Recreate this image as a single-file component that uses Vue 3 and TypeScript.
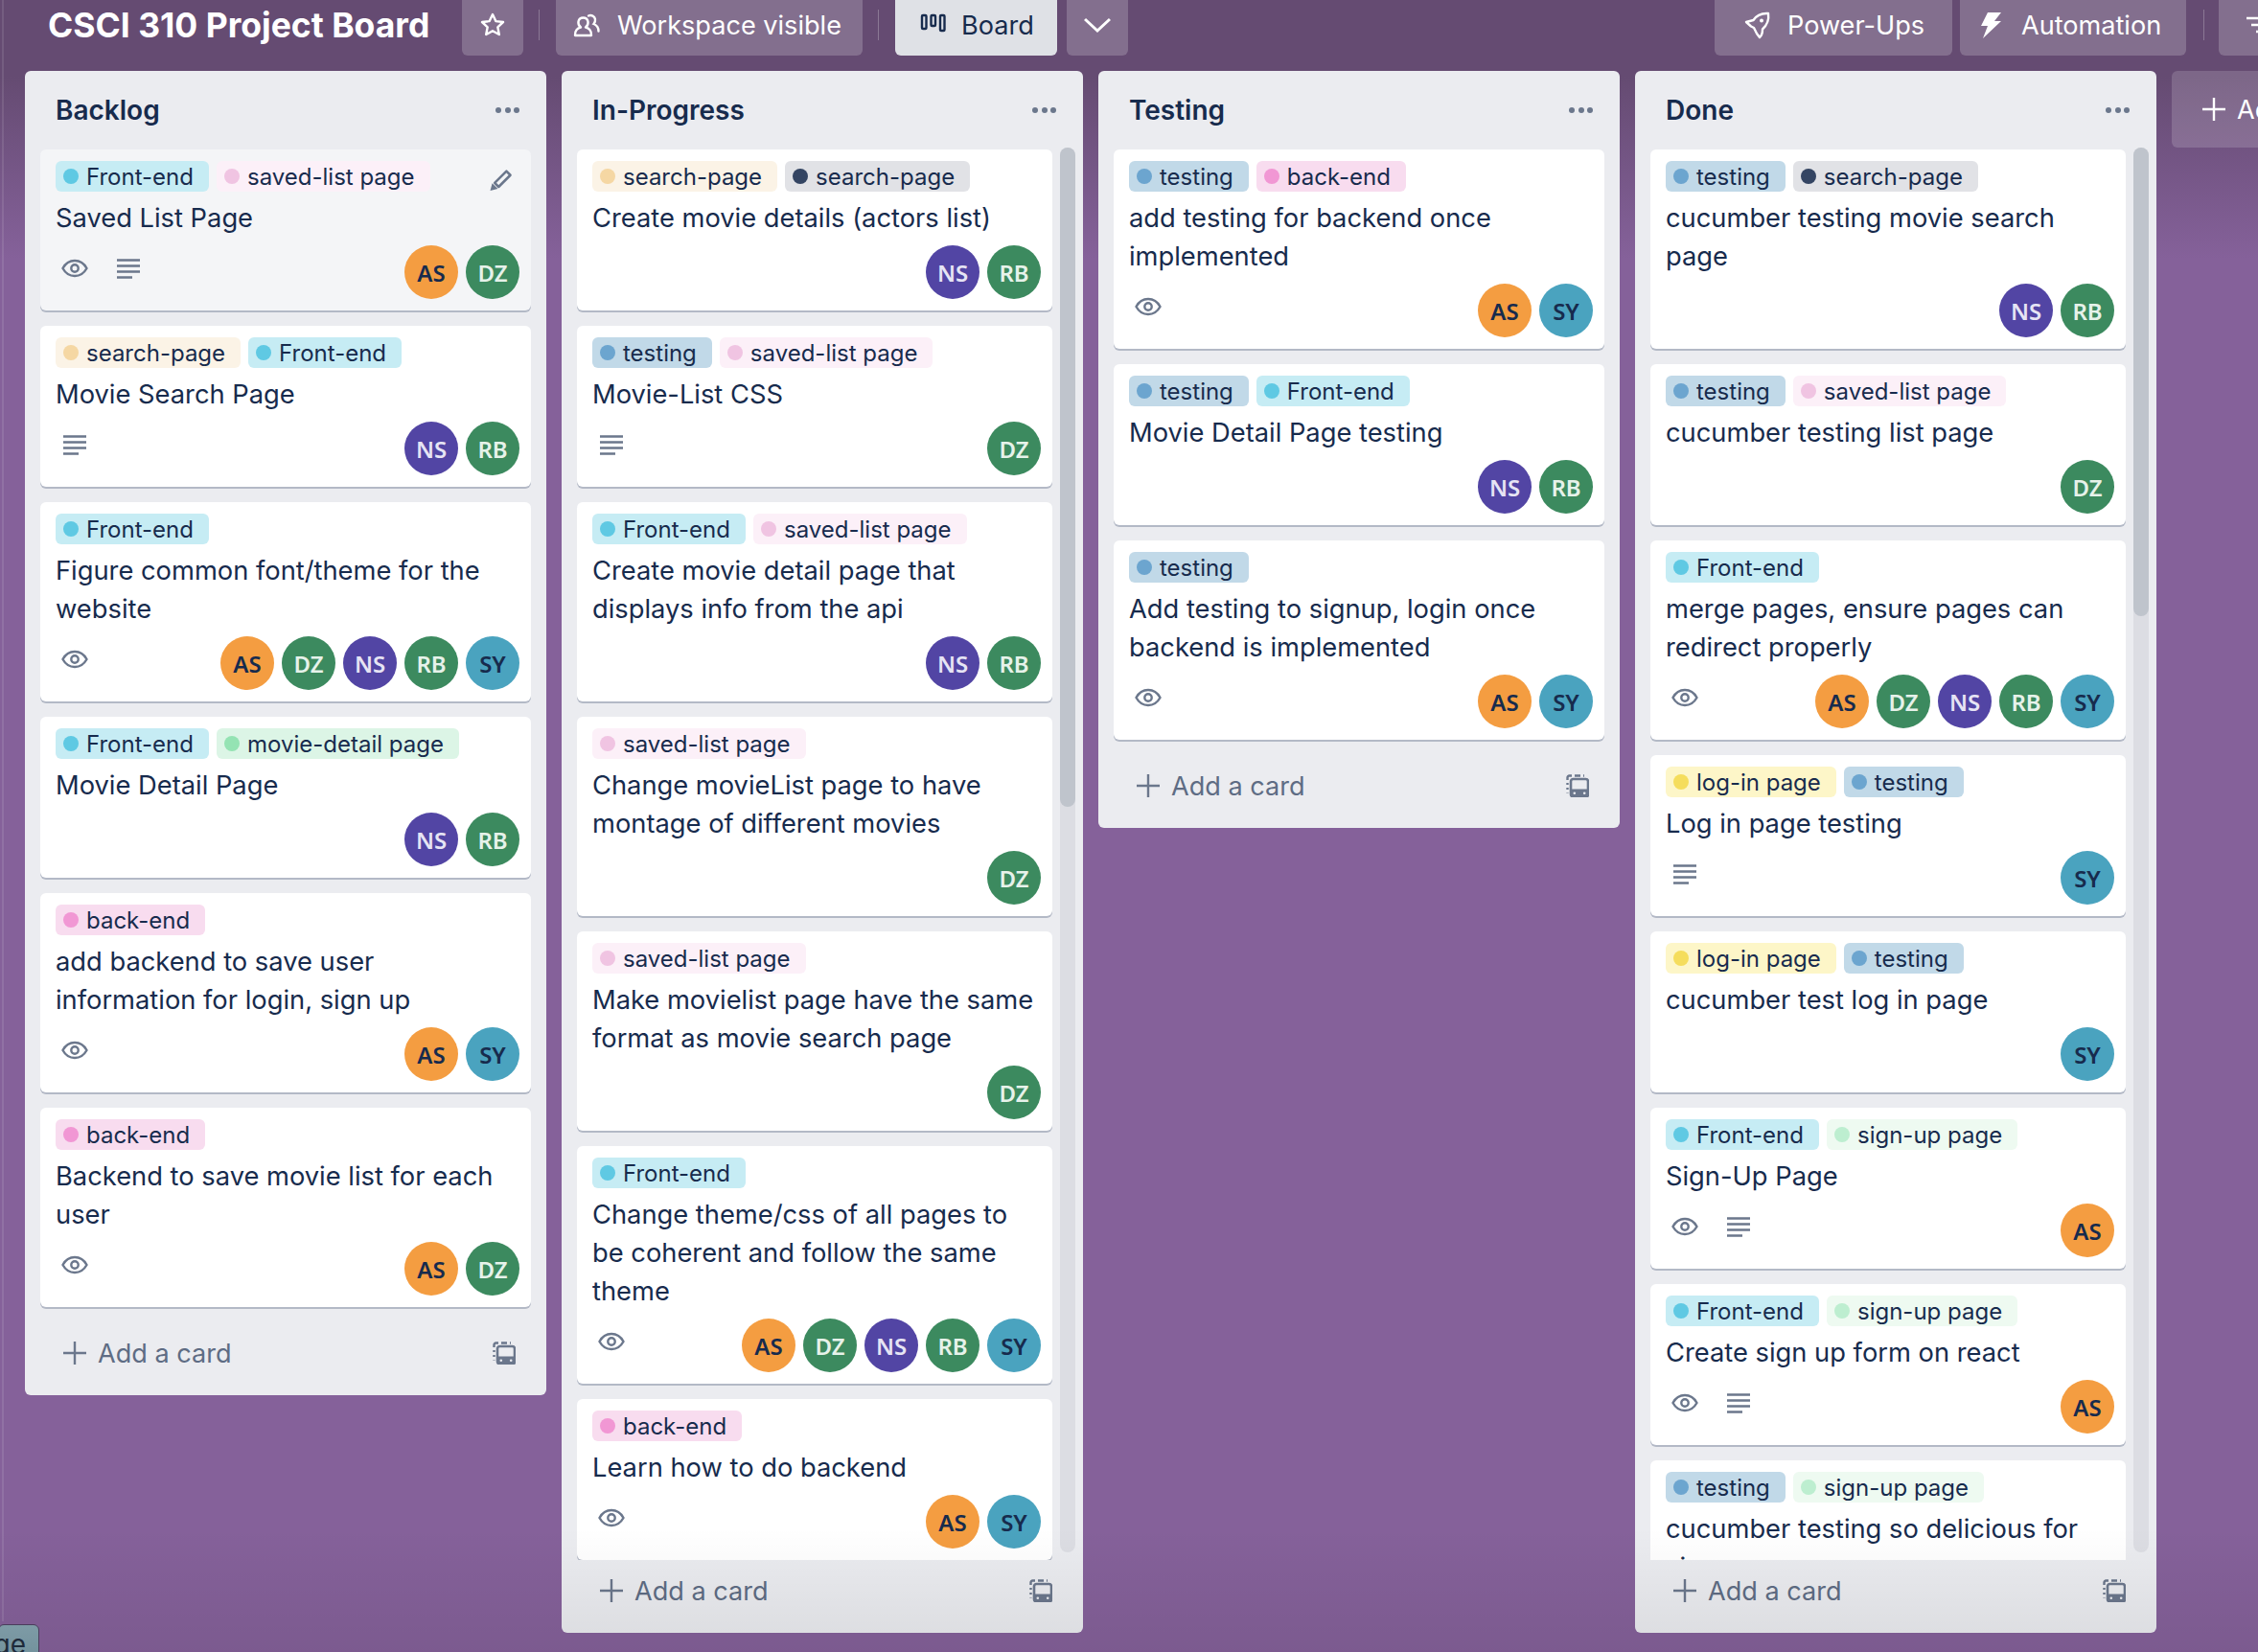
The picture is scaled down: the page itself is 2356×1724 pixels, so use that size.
<script setup lang="ts">
type Tag = 'front' | 'saved' | 'peach' | 'dark' | 'testing' | 'back' | 'detail' | 'login' | 'signup'
type Who = 'AS' | 'DZ' | 'NS' | 'RB' | 'SY'

interface Card {
  tags: Tag[]
  title: string
  eye?: boolean
  desc?: boolean
  who: Who[]
  hover?: boolean
}

interface List {
  name: string
  thumb?: number
  cards: Card[]
}

const tagNames: Record<Tag, string> = {
  front: 'Front-end',
  saved: 'saved-list page',
  peach: 'search-page',
  dark: 'search-page',
  testing: 'testing',
  back: 'back-end',
  detail: 'movie-detail page',
  login: 'log-in page',
  signup: 'sign-up page',
}

const everyone: Who[] = ['AS', 'DZ', 'NS', 'RB', 'SY']

const lists: List[] = [
  {
    name: 'Backlog',
    cards: [
      { tags: ['front', 'saved'], title: 'Saved List Page', eye: true, desc: true, who: ['AS', 'DZ'], hover: true },
      { tags: ['peach', 'front'], title: 'Movie Search Page', desc: true, who: ['NS', 'RB'] },
      { tags: ['front'], title: 'Figure common font/theme for the website', eye: true, who: everyone },
      { tags: ['front', 'detail'], title: 'Movie Detail Page', who: ['NS', 'RB'] },
      { tags: ['back'], title: 'add backend to save user information for login, sign up', eye: true, who: ['AS', 'SY'] },
      { tags: ['back'], title: 'Backend to save movie list for each user', eye: true, who: ['AS', 'DZ'] },
    ],
  },
  {
    name: 'In-Progress',
    thumb: 688,
    cards: [
      { tags: ['peach', 'dark'], title: 'Create movie details (actors list)', who: ['NS', 'RB'] },
      { tags: ['testing', 'saved'], title: 'Movie-List CSS', desc: true, who: ['DZ'] },
      { tags: ['front', 'saved'], title: 'Create movie detail page that displays info from the api', who: ['NS', 'RB'] },
      { tags: ['saved'], title: 'Change movieList page to have montage of different movies', who: ['DZ'] },
      { tags: ['saved'], title: 'Make movielist page have the same format as movie search page', who: ['DZ'] },
      { tags: ['front'], title: 'Change theme/css of all pages to be coherent and follow the same theme', eye: true, who: everyone },
      { tags: ['back'], title: 'Learn how to do backend', eye: true, who: ['AS', 'SY'] },
    ],
  },
  {
    name: 'Testing',
    cards: [
      { tags: ['testing', 'back'], title: 'add testing for backend once implemented', eye: true, who: ['AS', 'SY'] },
      { tags: ['testing', 'front'], title: 'Movie Detail Page testing', who: ['NS', 'RB'] },
      { tags: ['testing'], title: 'Add testing to signup, login once backend is implemented', eye: true, who: ['AS', 'SY'] },
    ],
  },
  {
    name: 'Done',
    thumb: 489,
    cards: [
      { tags: ['testing', 'dark'], title: 'cucumber testing movie search page', who: ['NS', 'RB'] },
      { tags: ['testing', 'saved'], title: 'cucumber testing list page', who: ['DZ'] },
      { tags: ['front'], title: 'merge pages, ensure pages can redirect properly', eye: true, who: everyone },
      { tags: ['login', 'testing'], title: 'Log in page testing', desc: true, who: ['SY'] },
      { tags: ['login', 'testing'], title: 'cucumber test log in page', who: ['SY'] },
      { tags: ['front', 'signup'], title: 'Sign-Up Page', eye: true, desc: true, who: ['AS'] },
      { tags: ['front', 'signup'], title: 'Create sign up form on react', eye: true, desc: true, who: ['AS'] },
      { tags: ['testing', 'signup'], title: 'cucumber testing so delicious for sign up', who: ['AS'] },
    ],
  },
]
</script>

<template>
  <div class="page">
    <svg class="sprite" aria-hidden="true">
      <symbol id="i-eye" viewBox="0 0 28 24">
        <path d="M1.5 12C4.5 6.5 9 4 14 4s9.500 2.500 12.500 8C23.500 17.500 19 20 14 20S4.500 17.500 1.500 12Z" fill="none" stroke="currentColor" stroke-width="2.400" />
        <circle cx="14" cy="12" r="3.700" fill="none" stroke="currentColor" stroke-width="2.400" />
      </symbol>
      <symbol id="i-desc" viewBox="0 0 24 24">
        <path d="M0 3.500h24M0 9.500h24M0 15.500h24M0 21.500h16" fill="none" stroke="currentColor" stroke-width="2.400" />
      </symbol>
      <symbol id="i-plus" viewBox="0 0 24 24">
        <path d="M12 0v24M0 12h24" fill="none" stroke="currentColor" stroke-width="2.400" />
      </symbol>
      <symbol id="i-template" viewBox="0 0 24 24">
        <path d="M1.500 6V3.500a2 2 0 0 1 2-2H6M9 1.500h6M18 1.500h1M1.500 9v2M1.500 14v2M1.500 19v.500" fill="none" stroke="currentColor" stroke-width="2.400" />
        <rect x="5" y="5" width="18" height="18.500" rx="2.500" fill="none" stroke="currentColor" stroke-width="2.600" />
        <path d="M5 15.500h18v8H5Z" fill="currentColor" />
        <circle cx="8.800" cy="19.800" r="1.300" fill="#ebecf0" />
        <circle cx="19.200" cy="19.800" r="1.300" fill="#ebecf0" />
      </symbol>
    </svg>

    <header class="header">
      <h1 class="board-title">CSCI 310 Project Board</h1>
      <button class="btn btn-square">
        <svg width="28" height="28" viewBox="0 0 28 28"><path d="M14 3l3.300 7.100 7.700.9-5.700 5.300 1.500 7.700L14 20.200 7.200 24l1.500-7.700L3 11l7.700-.9Z" fill="none" stroke="currentColor" stroke-width="2.400" stroke-linejoin="round" /></svg>
      </button>
      <span class="divider"></span>
      <button class="btn btn-workspace">
        <svg class="btn-icon" viewBox="0 0 32 32"><path d="M4 27c-.5-5 3-8 6-8.500-2-1.500-3-3.500-2.500-6 .5-2.500 2.500-4 5-4s4.500 1.500 5 4c.5 2.500-.5 4.500-2.500 6 3 .5 6.500 3.500 6 8.500Z" fill="none" stroke="currentColor" stroke-width="2.400" stroke-linejoin="round" /><path d="M18 6.500c3-1.500 6.500.5 7 3.500.4 2.200-.5 3.800-1.500 5 2.500 1 5 3.500 5 7.500" fill="none" stroke="currentColor" stroke-width="2.400" stroke-linecap="round" /></svg>
        Workspace visible
      </button>
      <span class="divider"></span>
      <button class="btn btn-board">
        <svg class="btn-icon" viewBox="0 0 32 32"><rect x="4" y="6" width="4.500" height="14" rx="1" fill="none" stroke="currentColor" stroke-width="2.400" /><rect x="13.500" y="6" width="4.500" height="11" rx="1" fill="none" stroke="currentColor" stroke-width="2.400" /><rect x="23" y="6" width="4.500" height="16" rx="1" fill="none" stroke="currentColor" stroke-width="2.400" /></svg>
        Board
      </button>
      <button class="btn btn-square btn-chevron">
        <svg width="28" height="28" viewBox="0 0 28 28"><path d="M1 8l13 12L27 8" fill="none" stroke="currentColor" stroke-width="3" /></svg>
      </button>
      <div class="header-right">
        <button class="btn btn-power">
          <svg class="btn-icon" viewBox="0 0 32 32"><path d="M28 4c-7-.5-12 1.500-15.500 7L5 13l5 4.500 3 1.500 3 6 3 4c2-1.500 3-4.500 3-8.500C27 16 29 11 28 4Z" fill="none" stroke="currentColor" stroke-width="2.400" stroke-linejoin="round" /><circle cx="21" cy="11.500" r="2" fill="currentColor" /></svg>
          Power-Ups
        </button>
        <button class="btn btn-auto">
          <svg class="btn-icon" viewBox="0 0 32 32"><path d="M13 3h14l-7 9h7L8 30l5-13H6Z" fill="currentColor" /></svg>
          Automation
        </button>
        <span class="divider"></span>
        <button class="btn btn-filter">
          <svg class="btn-icon" viewBox="0 0 32 32"><path d="M3 9h26M8 16h16M13 23h6" fill="none" stroke="currentColor" stroke-width="2.600" /></svg>
          Filter
        </button>
      </div>
    </header>

    <main class="board">
      <section v-for="list in lists" :key="list.name" class="list">
        <div class="list-head">
          <h2 class="list-name">{{ list.name }}</h2>
          <span class="dots"><i></i><i></i><i></i></span>
        </div>

        <div class="list-body">
          <div class="cards" :class="{ 'has-bar': list.thumb }">
            <article v-for="card in list.cards" :key="card.title" class="card" :class="{ hover: card.hover }">
              <div class="tags">
                <span v-for="tag in card.tags" :key="tag" class="tag" :class="'tag-' + tag">
                  <i class="dot"></i>{{ tagNames[tag] }}
                </span>
              </div>
              <svg v-if="card.hover" class="pencil" viewBox="0 0 24 24">
                <path d="M7 14.500L17.500 4l3.500 3.500L10.500 18Z" fill="none" stroke="currentColor" stroke-width="2.200" stroke-linejoin="round" />
                <path d="M3 21.500l1.800-6.800 5 5Z" fill="currentColor" />
              </svg>
              <p class="card-title">{{ card.title }}</p>
              <div class="card-foot">
                <div class="badges">
                  <span v-if="card.eye" class="badge"><svg width="28" height="24"><use href="#i-eye" /></svg></span>
                  <span v-if="card.desc" class="badge"><svg width="24" height="24"><use href="#i-desc" /></svg></span>
                </div>
                <div class="avatars">
                  <span v-for="w in card.who" :key="w" class="avatar" :class="'av-' + w">{{ w }}</span>
                </div>
              </div>
            </article>
          </div>
          <div v-if="list.thumb" class="scrollbar">
            <div class="thumb" :style="{ height: list.thumb + 'px' }"></div>
          </div>
        </div>

        <div class="composer">
          <span class="add-icon"><svg width="24" height="24"><use href="#i-plus" /></svg></span>
          <span class="add-text">Add a card</span>
          <svg class="template" width="24" height="24"><use href="#i-template" /></svg>
        </div>
      </section>

      <div class="add-list">
        <svg width="24" height="24"><use href="#i-plus" /></svg>
        <span>Add another list</span>
      </div>
    </main>

    <div class="edge-line"></div>
    <div class="bottom-shade"></div>
    <div class="tooltip"><span>saved-list page</span></div>
  </div>
</template>

<style>
html, body {
  margin: 0;
  background: #85619a;
}
</style>

<style scoped>
.page {
  position: relative;
  width: 2356px;
  height: 1724px;
  overflow: hidden;
  font-family: Inter, "Liberation Sans", sans-serif;
  color: #172b4d;
  background: linear-gradient(180deg, #654b72 0, #654b72 80px, #85619a 270px, #85619a 100%);
}

.sprite {
  position: absolute;
  width: 0;
  height: 0;
}

.header {
  display: flex;
  align-items: center;
  height: 64px;
  margin-top: -6px;
  margin-bottom: 16px;
  padding-left: 50px;
}

.board-title {
  margin: 0 32px 0 0;
  width: 400px;
  font-size: 35.500px;
  font-weight: 700;
  color: #fff;
  white-space: nowrap;
}

.btn {
  display: flex;
  align-items: center;
  flex: none;
  height: 64px;
  padding: 0 24px 0 16px;
  gap: 16px;
  border: 0;
  border-radius: 6px;
  background: rgba(255, 255, 255, 0.2);
  color: #fff;
  font-family: inherit;
  font-size: 27.100px;
  white-space: nowrap;
}

.btn-icon {
  width: 32px;
  height: 32px;
  flex: none;
}

.btn-square {
  width: 64px;
  padding: 0;
  justify-content: center;
}

.divider {
  flex: none;
  width: 1px;
  height: 32px;
  margin: 0 17px 0 16px;
  background: rgba(255, 255, 255, 0.25);
}

.btn-workspace {
  width: 320px;
}

.btn-board {
  width: 169px;
  padding: 0 0 0 24px;
  gap: 13px;
  background: #dfe1e6;
  color: #172b4d;
}

.btn-chevron {
  margin-left: 10px;
}

.header-right {
  display: flex;
  align-items: center;
  margin-left: auto;
  gap: 8px;
  margin-right: -79px;
}

.btn-power {
  width: 248px;
  padding-left: 28px;
}

.btn-auto {
  width: 236px;
}

.header-right .divider {
  margin: 0 7px 0 10px;
}

.btn-filter {
  width: 120px;
  padding-left: 26px;
}

.board {
  display: flex;
  align-items: flex-start;
  gap: 16px;
  padding-left: 26px;
}

.list {
  flex: none;
  display: flex;
  flex-direction: column;
  width: 544px;
  max-height: 1630px;
  border-radius: 6px;
  background: #ebecf0;
}

.list-head {
  flex: none;
  display: flex;
  align-items: center;
  justify-content: space-between;
  height: 82px;
  padding: 0 28px 0 32px;
  box-sizing: border-box;
}

.list-name {
  margin: 0;
  font-size: 28px;
  font-weight: 600;
}

.dots {
  display: flex;
  gap: 3.500px;
}

.dots i {
  width: 6px;
  height: 6px;
  border-radius: 50%;
  background: #6b778c;
}

.list-body {
  flex: 1;
  min-height: 0;
  display: flex;
}

.cards {
  flex: 1;
  min-width: 0;
  overflow: hidden;
  padding: 0 16px;
}

.cards.has-bar {
  padding-right: 8px;
}

.card {
  position: relative;
  margin-bottom: 16px;
  padding: 12px 12px 12px 16px;
  border-radius: 6px;
  background: #fff;
  box-shadow: 0 2px 0 #b3b9c6;
}

.card.hover {
  background: #f4f5f7;
}

.tags {
  display: flex;
  gap: 8px;
  margin-bottom: 8px;
}

.tag {
  display: flex;
  align-items: center;
  height: 32px;
  padding: 0 16px 0 8px;
  gap: 8px;
  border-radius: 6px;
  font-size: 24px;
  white-space: nowrap;
}

.dot {
  width: 16px;
  height: 16px;
  border-radius: 50%;
}

.tag-front { background: #c6ecf4; }
.tag-front .dot { background: #5fc9e3; }
.tag-saved { background: #fcf0f8; }
.tag-saved .dot { background: #f0c4e2; }
.tag-peach { background: #fbf3e6; }
.tag-peach .dot { background: #f5d7a3; }
.tag-dark { background: #e1e2e6; }
.tag-dark .dot { background: #344563; }
.tag-testing { background: #c1d9e8; }
.tag-testing .dot { background: #6ca5cf; }
.tag-back { background: #f8dcef; }
.tag-back .dot { background: #f197d4; }
.tag-detail { background: #dcf5e6; }
.tag-detail .dot { background: #94e3b3; }
.tag-login { background: #fdf6c8; }
.tag-login .dot { background: #f5dd5c; }
.tag-signup { background: #eefaf1; }
.tag-signup .dot { background: #bdeed0; }

.pencil {
  position: absolute;
  top: 18px;
  right: 18px;
  width: 28px;
  height: 28px;
  color: #6b778c;
}

.card-title {
  margin: 0 0 8px;
  font-size: 27.300px;
  line-height: 40px;
}

.card-foot {
  display: flex;
  justify-content: space-between;
  min-height: 56px;
}

.badges {
  display: flex;
  color: #6b778c;
}

.badge {
  display: flex;
  align-items: center;
  justify-content: center;
  width: 40px;
  height: 48px;
  margin-right: 16px;
}

.avatars {
  display: flex;
  gap: 8px;
  margin-left: auto;
}

.avatar {
  display: flex;
  align-items: center;
  justify-content: center;
  width: 56px;
  height: 56px;
  border-radius: 50%;
  font-family: "Noto Sans", sans-serif;
  font-size: 24px;
  font-weight: 600;
}

.av-AS { background: #f49d41; color: #172b4d; }
.av-DZ { background: #3c8a5f; color: #e6f2ea; }
.av-NS { background: #5245a4; color: #e6e4f4; }
.av-RB { background: #3c8a5f; color: #e6f2ea; }
.av-SY { background: #4aa3bf; color: #172b4d; }

.scrollbar {
  flex: none;
  width: 16px;
  margin: -2px 8px 8px 0;
  border-radius: 8px;
  background: #dcdde3;
}

.thumb {
  border-radius: 8px;
  background: #bfc4cc;
}

.composer {
  flex: none;
  display: flex;
  align-items: center;
  height: 48px;
  margin: 8px 32px 20px 32px;
  color: #5e6c84;
  font-size: 27.100px;
}

.add-icon {
  display: flex;
  justify-content: center;
  width: 40px;
  margin-right: 4px;
  color: #6b778c;
}

.template {
  margin-left: auto;
  color: #6b778c;
}

.add-list {
  flex: none;
  display: flex;
  align-items: center;
  gap: 12px;
  width: 400px;
  height: 80px;
  padding-left: 32px;
  box-sizing: border-box;
  border-radius: 6px;
  background: rgba(255, 255, 255, 0.16);
  color: #fff;
  font-size: 27.100px;
  white-space: nowrap;
}

.edge-line {
  position: absolute;
  left: 2px;
  top: 0;
  bottom: 32px;
  width: 2px;
  background: rgba(255, 255, 255, 0.1);
}

.bottom-shade {
  position: absolute;
  left: 0;
  right: 0;
  bottom: 0;
  height: 130px;
  background: linear-gradient(180deg, rgba(0, 0, 0, 0), rgba(0, 0, 0, 0.07));
  pointer-events: none;
}

.tooltip {
  position: absolute;
  left: -2px;
  bottom: -13px;
  display: flex;
  justify-content: flex-end;
  align-items: center;
  width: 43px;
  height: 42px;
  overflow: hidden;
  box-sizing: border-box;
  padding-right: 13px;
  border: 1px solid #4a3d5c;
  border-radius: 6px;
  background: linear-gradient(180deg, #7e9ba6, #6f8f9a);
  color: #1e2a3a;
  font-size: 28px;
  white-space: nowrap;
}
</style>
